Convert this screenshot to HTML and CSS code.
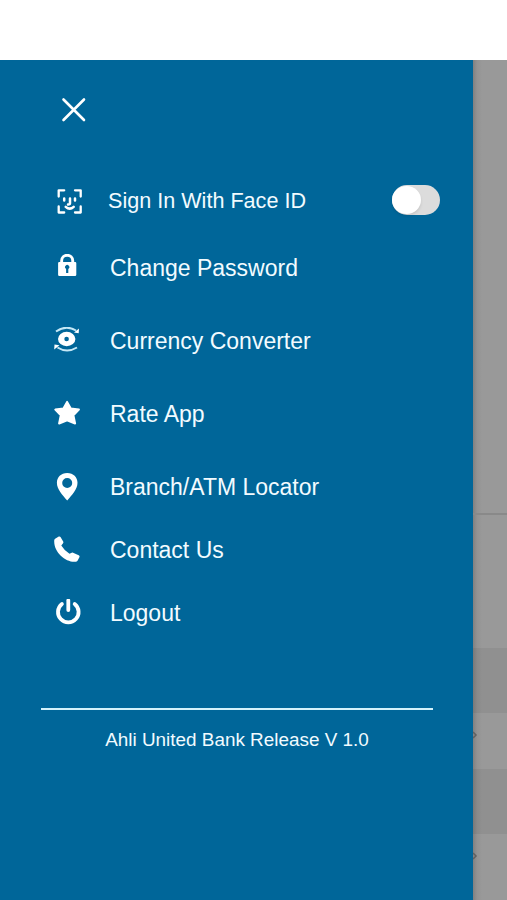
FILE: index.html
```html
<!DOCTYPE html>
<html lang="en">
<head>
<meta charset="utf-8">
<title>Menu</title>
<link rel="stylesheet" href="styles.css">
</head>
<body>
<div class="status-bar"></div>
<div class="screen">
  <nav class="drawer">
    <button class="close" aria-label="Close">
      <svg width="26" height="26" viewBox="0 0 26 26"><path d="M2.500 2.500 23 23M23 2.500 2.500 23"/></svg>
    </button>
    <ul class="menu">
      <li class="item face">
        <svg class="icon line" viewBox="0 0 28 28"><path d="M4.700 9.500V3.300h5.500M21 3.300h5.700v6.200M26.700 19.500v6h-5.700M10.200 25.500H4.700v-6" stroke-width="2.300" stroke-linecap="round" stroke-linejoin="round"/><path d="M10.200 11.500v2M21 11.500v2M16 11.500v4.800q0 1.400-2 1.200M11.700 19.800q4 3.700 8 0" stroke-width="2.500" stroke-linecap="round"/></svg>
        <span class="label">Sign In With Face ID</span>
        <span class="toggle"><span class="knob"></span></span>
      </li>
      <li class="item">
        <svg class="icon" viewBox="0 0 28 28"><path fill-rule="evenodd" d="M5.200 8h1V6.800a7 7 0 0 1 14 0V8h1q1.100 0 1.100 1.300v11.400q0 1.300-1.300 1.300H5.400q-1.300 0-1.300-1.300V9.300Q4.100 8 5.200 8zM9.100 8h8.200V6.800a4.100 4.100 0 0 0-8.200 0zM12.100 14.900V19h2.200v-4.100a2.100 2.100 0 1 0-2.200 0z"/></svg>
        <span class="label">Change Password</span>
      </li>
      <li class="item">
        <svg class="icon" viewBox="0 0 28 28"><path fill-rule="evenodd" d="M4 12a8.700 7.200 0 1 0 17.400 0a8.700 7.200 0 1 0-17.400 0zM10.300 12a2.300 2.200 0 1 0 4.600 0a2.300 2.200 0 1 0-4.600 0z"/><path class="arc" d="M2 4.500Q12-2.500 22 3.500M3.500 20.500Q13 26.500 23 20.500"/><path d="M20 5.500 25 1.500l-.3 4.700zM5.500 18.300.2 22.400l.3-5z"/></svg>
        <span class="label">Currency Converter</span>
      </li>
      <li class="item">
        <svg class="icon round" viewBox="0 0 28 28"><path d="m13.100 1.900 3.700 6.700 8.100 1-5.500 5.700 1.700 8.200-8-3.200-8 3.200 1.700-8.200-5.500-5.700 8.100-1z"/></svg>
        <span class="label">Rate App</span>
      </li>
      <li class="item">
        <svg class="icon" viewBox="0 0 28 28"><path fill-rule="evenodd" d="M13.200 0C7 0 2.900 4.300 2.900 9.800c0 6.400 5.600 12.300 10.300 17.700 4.700-5.400 10.300-11.300 10.300-17.700C23.500 4.300 19.400 0 13.200 0zm0 5a5 5 0 1 1 0 10 5 5 0 0 1 0-10z"/></svg>
        <span class="label">Branch/ATM Locator</span>
      </li>
      <li class="item near">
        <svg class="icon" viewBox="0 0 28 28"><path d="M1.500 2.500 4.800.6q1.100-.6 1.700.5l2.700 4.500q.6 1-.3 1.900L7.300 9.400q3 5 8.200 8.400l2.200-1q1-.5 1.900.1l5.100 2.300q1.300.7.8 1.900l-1.800 3.400q-.5 1-1.700 1.200C12.500 27 .3 17 .2 5.500.2 3.700.5 3.100 1.500 2.500z"/></svg>
        <span class="label">Contact Us</span>
      </li>
      <li class="item near">
        <svg class="icon line" viewBox="0 0 28 28"><path d="M7.900 5a10.300 10.300 0 1 0 12.800 0" stroke-width="3.800" stroke-linecap="round"/><path d="M14.300 1.500v9.500" stroke-width="3.800" stroke-linecap="round"/></svg>
        <span class="label">Logout</span>
      </li>
    </ul>
    <footer class="release">Ahli United Bank Release V 1.0</footer>
  </nav>
  <div class="backdrop">
    <div class="panel top"></div>
    <div class="panel middle"></div>
    <div class="panel band"></div>
    <div class="panel row"><svg class="chevron" viewBox="0 0 5 8"><path d="m0 1 3 3-3 3"/></svg></div>
    <div class="panel band"></div>
    <div class="panel row"><svg class="chevron" viewBox="0 0 5 8"><path d="m0 1 3 3-3 3"/></svg></div>
  </div>
</div>
</body>
</html>
```
FILE: styles.css
```css
* { box-sizing: border-box; }

body {
  margin: 0;
  height: 900px;
  overflow: hidden;
  background: #fff;
  font-family: "Liberation Sans", Arial, sans-serif;
}

.status-bar { height: 60px; }

.screen {
  display: flex;
  height: 840px;
}

.drawer {
  width: 473px;
  flex: none;
  padding: 37px 40px 0 41px;
  background: #006699;
  color: #f2fbff;
}

.close {
  display: block;
  width: 26px;
  height: 26px;
  margin-left: 20px;
  padding: 0;
  border: 0;
  background: none;
}

.close svg {
  display: block;
  fill: none;
  stroke: #fff;
  stroke-width: 2.6;
  stroke-linecap: round;
}

.menu {
  list-style: none;
  margin: 55px 0 0;
  padding: 0 0 72px 13px;
  border-bottom: 2px solid #d4f2fb;
}

.item {
  display: flex;
  align-items: center;
  height: 46px;
  margin-top: 27px;
  font-size: 23px;
  line-height: 28px;
}

.item.face {
  margin-top: 0;
  font-size: 21.6px;
}

.item.face + .item { margin-top: 21px; }
.item.near { margin-top: 17px; }

.icon {
  width: 28px;
  height: 28px;
  flex: none;
  margin-right: 28px;
  fill: #fff;
}

.face .icon { margin-right: 26px; }

.icon.line {
  fill: none;
  stroke: #fff;
}

.icon.round {
  stroke: #fff;
  stroke-width: 2;
  stroke-linejoin: round;
}

.icon .arc {
  fill: none;
  stroke: #c5e8f6;
  stroke-width: 2;
}

.label { white-space: nowrap; }

.toggle {
  width: 48px;
  height: 30px;
  margin: 0 -7px 2px auto;
  padding: 1px 0;
  border-radius: 15px;
  background: #dcdcdc;
}

.knob {
  display: block;
  width: 29px;
  height: 28px;
  border-radius: 50%;
  background: #fff;
  box-shadow: 0 2px 3px rgba(0, 0, 0, 0.1);
}

.release {
  margin-top: 19px;
  text-align: center;
  font-size: 18.9px;
  line-height: 22px;
  white-space: nowrap;
}

.backdrop {
  flex: 1;
  background: linear-gradient(90deg, #808080 0, #929292 4px, #999 9px);
}

.panel.top {
  height: 455px;
  border-bottom: 2px solid #898989;
}

.panel.middle { height: 133px; }

.panel.band {
  height: 65px;
  background: rgba(0, 0, 0, 0.06);
}

.panel.row {
  height: 56px;
  padding-top: 18px;
}

.chevron {
  display: block;
  width: 5px;
  height: 8px;
  fill: none;
  stroke: #606060;
  stroke-width: 1.5;
}
```
